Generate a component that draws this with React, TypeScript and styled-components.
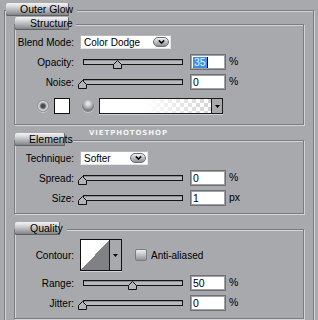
import styled, { createGlobalStyle } from "styled-components";

const GlobalStyle = createGlobalStyle`
  html, body {
    margin: 0;
    padding: 0;
  }
  body {
    width: 318px;
    height: 320px;
    overflow: hidden;
    background: #a7a9ad;
    font-family: "Liberation Sans", Arial, sans-serif;
    font-size: 10px;
    color: #000;
  }
`;

const Page = styled.div`
  padding: 10px 0 0 4px;
`;

const Frame = styled.div`
  box-sizing: border-box;
  width: 310px;
  padding-bottom: 12px;
  border: 1px solid #7a7c80;
  box-shadow: inset 1px 1px 0 #d2d4d7, 1px 1px 0 #d2d4d7;
`;

const Group = styled.div<{ $gap?: number }>`
  box-sizing: border-box;
  width: 290px;
  margin: ${(p) => p.$gap ?? 0}px 0 0 9px;
  border: 1px solid #7a7c80;
  box-shadow: inset 1px 1px 0 #d2d4d7, 1px 1px 0 #d2d4d7;
`;

const Legend = styled.div<{ $indent?: number }>`
  display: flex;
  height: 13px;
  margin-top: -8px;
  margin-left: ${(p) => p.$indent ?? 0}px;
`;

const TabWrap = styled.div<{ $pad: number }>`
  display: flex;
  background: #a7a9ad;
  padding-right: ${(p) => p.$pad}px;
`;

const Tab = styled.div<{ $w: number; $text: number }>`
  box-sizing: border-box;
  width: ${(p) => p.$w}px;
  height: 13px;
  padding-left: ${(p) => p.$text}px;
  line-height: 13px;
  white-space: nowrap;
  overflow: visible;
  border-radius: 2px 1px 1px 2px;
  background: linear-gradient(
    to bottom,
    #f4f4f5 0%,
    #d9dbdd 25%,
    #b3b5b8 55%,
    #8d8f93 85%,
    #6c6e72 100%
  );
  box-shadow: inset -1px 0 0 #6a6c70, inset 0 -1px 0 #5f6165;
  font-size: 10.5px;
`;

const Body = styled.div<{ $bottom: number }>`
  display: flex;
  flex-direction: column;
  gap: 4px;
  padding: 4px 0 ${(p) => p.$bottom}px 0;
`;

const Row = styled.div<{ $h?: number }>`
  display: flex;
  align-items: center;
  height: ${(p) => p.$h ?? 16}px;
`;

const Label = styled.div`
  flex-shrink: 0;
  width: 59px;
  margin-right: 6px;
  text-align: right;
  white-space: nowrap;
`;

const Select = styled.div<{ $w: number }>`
  box-sizing: border-box;
  display: flex;
  align-items: center;
  justify-content: space-between;
  width: ${(p) => p.$w}px;
  height: 14px;
  padding: 0 1px 0 3px;
  background: #fff;
  border: 1px solid #b4b6b9;
  border-right-color: #e4e5e6;
  border-bottom-color: #e4e5e6;
`;

const Pill = styled.div`
  box-sizing: border-box;
  display: flex;
  align-items: center;
  justify-content: center;
  width: 16px;
  height: 10px;
  border-radius: 5px;
  border: 1px solid #6c6e72;
  background: linear-gradient(to bottom, #f0f0f0 0%, #c3c5c8 45%, #8e9094 100%);
`;

const SliderBox = styled.div`
  position: relative;
  box-sizing: border-box;
  flex-shrink: 0;
  width: 103px;
  height: 16px;
  padding: 5px 0 0 3px;
`;

const Track = styled.div`
  box-sizing: border-box;
  height: 6px;
  border: 1px solid #141414;
  background: #b7b9bd;
  box-shadow: inset 0 1px 0 #8c8e92;
`;

const Thumb = styled.svg`
  position: absolute;
  top: 6px;
`;

const NumberBox = styled.div`
  box-sizing: border-box;
  flex-shrink: 0;
  width: 36px;
  height: 16px;
  margin-left: 7px;
  padding-left: 2px;
  border: 1px solid #6e7074;
  box-shadow: inset 0 0 0 1px #9fa1a5;
  background: #fff;
  line-height: 14px;
  font-size: 10.5px;
  display: flex;
  align-items: center;
`;

const Selected = styled.span`
  background: #3d8fe8;
  color: #e8f2ff;
  line-height: 11px;
  padding: 0 1px;
`;

const Caret = styled.span`
  display: inline-block;
  width: 1px;
  height: 11px;
  background: #000;
`;

const Unit = styled.div`
  align-self: flex-start;
  margin-left: 3px;
  padding-top: 1px;
  font-size: 10.5px;
`;

const ColorRow = styled(Row)`
  margin-top: 4px;
  padding-left: 22px;
`;

const Radio = styled.div<{ $on?: boolean; $gap?: number }>`
  width: 12px;
  height: 12px;
  margin-left: ${(p) => p.$gap ?? 0}px;
  border-radius: 50%;
  flex-shrink: 0;
  background: ${(p) =>
    p.$on
      ? "radial-gradient(circle at 50% 50%, #474a52 0 1.5px, #70737a 2.5px, #b6b8bc 3.5px, #d3d5d7 4.5px, #95979b 5.5px, #7a7c80 6px)"
      : "radial-gradient(circle at 50% 30%, #f6f6f7 0, #d4d6d8 2px, #a9abaf 4.5px, #828488 6px)"};
  box-shadow: 0 1px 0 #c8cacd;
`;

const Swatch = styled.div`
  box-sizing: border-box;
  width: 16px;
  height: 16px;
  margin-left: 5px;
  background: #fff;
  border: 1px solid #111;
`;

const GradientPicker = styled.div`
  box-sizing: border-box;
  display: flex;
  width: 124px;
  height: 16px;
  margin-left: 5px;
  border: 1px solid #1a1a1a;
  box-shadow: 0 1px 0 #d2d4d7;
`;

const GradientStrip = styled.div`
  flex: 1;
  background-color: #fff;
  background-image: linear-gradient(
      to right,
      #fff 0%,
      #fff 40%,
      rgba(255, 255, 255, 0) 100%
    ),
    linear-gradient(45deg, #d3d3d3 25%, transparent 25%, transparent 75%, #d3d3d3 75%),
    linear-gradient(45deg, #d3d3d3 25%, transparent 25%, transparent 75%, #d3d3d3 75%);
  background-size: 100% 100%, 8px 8px, 8px 8px;
  background-position: 0 0, 0 0, 4px 4px;
`;

const ArrowCell = styled.div<{ $w?: number }>`
  display: flex;
  align-items: center;
  justify-content: center;
  width: ${(p) => p.$w ?? 10}px;
  border-left: 1px solid #1a1a1a;
  background: #a7a9ad;
`;

const Contour = styled.div`
  box-sizing: border-box;
  display: flex;
  width: 42px;
  height: 32px;
  border: 1px solid #111;
  box-shadow: 0 1px 0 #d2d4d7;
`;

const ContourPreview = styled.div`
  width: 29px;
  background: linear-gradient(to top left, #7f8185 50%, #fff 50%);
`;

const Check = styled.div`
  box-sizing: border-box;
  width: 12px;
  height: 12px;
  margin-left: 13px;
  border: 1px solid #7a7c80;
  border-radius: 2px;
  background: linear-gradient(to bottom, #eeeeef 0%, #c0c2c5 50%, #8f9195 100%);
`;

const CheckLabel = styled.div`
  margin-left: 4px;
`;

const Watermark = styled.div`
  height: 15px;
  display: flex;
  align-items: center;
  padding-left: 84px;
  color: #f4f4f6;
  font-family: "DejaVu Sans", sans-serif;
  font-weight: bold;
  font-size: 7px;
  letter-spacing: 0.9px;
`;

const DownArrow = () => (
  <svg width="5" height="3" viewBox="0 0 5 3">
    <polygon points="0,0 5,0 2.5,3" fill="#000" />
  </svg>
);

const Chevron = () => (
  <svg width="7" height="4" viewBox="0 0 7 4">
    <polyline points="0.8,0.5 3.5,3 6.2,0.5" fill="none" stroke="#000" strokeWidth="1.6" />
  </svg>
);

const Slider = ({ pct }: { pct: number }) => (
  <SliderBox>
    <Track />
    <Thumb width="9" height="9" viewBox="0 0 9 9" style={{ left: 2 + pct - 4.5 }}>
      <polygon
        points="4.5,0.5 8.5,4.5 8.5,8.5 0.5,8.5 0.5,4.5"
        fill="#b2b4b8"
        stroke="#111"
        strokeWidth="1"
      />
    </Thumb>
  </SliderBox>
);

const SliderRow = ({
  label,
  pct,
  value,
  unit = "%",
}: {
  label: string;
  pct: number;
  value: React.ReactNode;
  unit?: string;
}) => (
  <Row>
    <Label>{label}</Label>
    <Slider pct={pct} />
    <NumberBox>{value}</NumberBox>
    <Unit>{unit}</Unit>
  </Row>
);

const App = () => {
  return (
    <>
      <GlobalStyle />
      <Page>
        <Frame>
          <Legend $indent={1}>
            <TabWrap $pad={8}>
              <Tab $w={63} $text={14}>
                Outer Glow
              </Tab>
            </TabWrap>
          </Legend>

          <Group $gap={8}>
            <Legend>
              <TabWrap $pad={7}>
                <Tab $w={54} $text={15}>
                  Structure
                </Tab>
              </TabWrap>
            </Legend>
            <Body $bottom={10}>
              <Row>
                <Label>Blend Mode:</Label>
                <Select $w={91}>
                  Color Dodge
                  <Pill>
                    <Chevron />
                  </Pill>
                </Select>
              </Row>
              <SliderRow
                label="Opacity:"
                pct={35}
                value={
                  <>
                    <Selected>35</Selected>
                    <Caret />
                  </>
                }
              />
              <SliderRow label="Noise:" pct={0} value="0" />
              <ColorRow>
                <Radio $on />
                <Swatch />
                <Radio $gap={12} />
                <GradientPicker>
                  <GradientStrip />
                  <ArrowCell>
                    <DownArrow />
                  </ArrowCell>
                </GradientPicker>
              </ColorRow>
            </Body>
          </Group>

          <Watermark>VIETPHOTOSHOP</Watermark>

          <Group>
            <Legend>
              <TabWrap $pad={8}>
                <Tab $w={50} $text={14}>
                  Elements
                </Tab>
              </TabWrap>
            </Legend>
            <Body $bottom={7}>
              <Row>
                <Label>Technique:</Label>
                <Select $w={68}>
                  Softer
                  <Pill>
                    <Chevron />
                  </Pill>
                </Select>
              </Row>
              <SliderRow label="Spread:" pct={0} value="0" />
              <SliderRow label="Size:" pct={0} value="1" unit="px" />
            </Body>
          </Group>

          <Group $gap={15}>
            <Legend>
              <TabWrap $pad={7}>
                <Tab $w={45} $text={15}>
                  Quality
                </Tab>
              </TabWrap>
            </Legend>
            <Body $bottom={7}>
              <Row $h={32}>
                <Label>Contour:</Label>
                <Contour>
                  <ContourPreview />
                  <ArrowCell $w={11}>
                    <DownArrow />
                  </ArrowCell>
                </Contour>
                <Check />
                <CheckLabel>Anti-aliased</CheckLabel>
              </Row>
              <SliderRow label="Range:" pct={50} value="50" />
              <SliderRow label="Jitter:" pct={0} value="0" />
            </Body>
          </Group>
        </Frame>
      </Page>
    </>
  );
};

export default App;
